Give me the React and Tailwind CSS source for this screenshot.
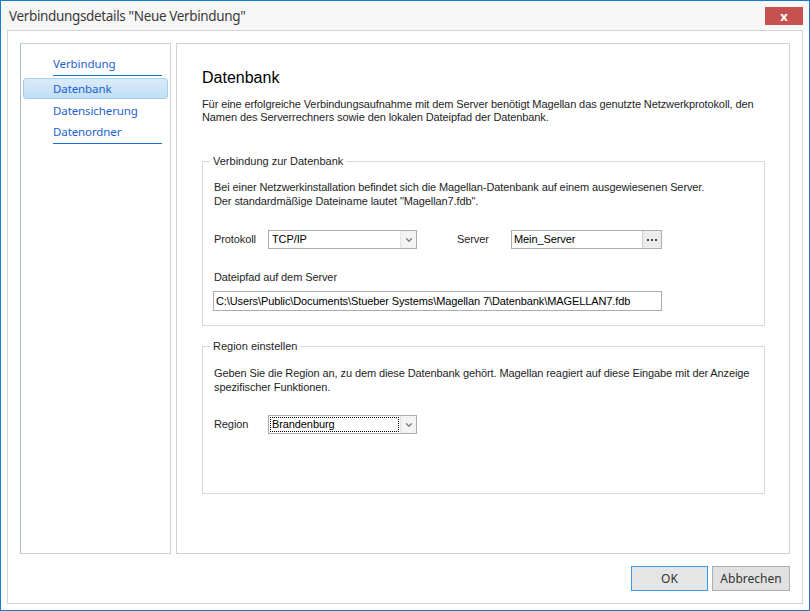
import { ChevronDown } from 'lucide-react'

const ui = { fontFamily: '"Noto Sans", "Open Sans", sans-serif' }
const tahoma = { fontFamily: '"Liberation Sans", Arial, sans-serif' }

function SelectBox({ value, focused }) {
  return (
    <div className="flex h-[19px] w-[149px] border border-[#acacac] bg-white">
      <div className="flex flex-1 items-center px-[1px]">
        <span
          className={
            focused
              ? 'flex h-[15px] w-full items-center border border-dotted border-black pl-[1px] text-[11px] text-black'
              : 'flex h-[15px] w-full items-center pl-[2px] text-[11px] text-black'
          }
        >
          {value}
        </span>
      </div>
      <div className="flex w-[16px] items-center justify-center border-l border-[#e3e3e3] bg-[#f3f3f3]">
        <ChevronDown size={10} strokeWidth={3} className="text-[#7d7d7d]" />
      </div>
    </div>
  )
}

function App() {
  return (
    <div className="flex h-[611px] w-[810px] flex-col border border-[#1979ca] bg-white" style={ui}>
      {/* title bar */}
      <div className="flex h-[29px] items-start justify-between bg-[#f7f7f7] pl-[8px] pr-[6px]">
        <span className="mt-[5px] text-[13.5px] leading-[20px] tracking-[-0.35px] text-[#3a3a3a]">
          Verbindungsdetails "Neue Verbindung"
        </span>
        <div className="mt-[6px] flex h-[18px] w-[38px] items-center justify-center bg-[#c75050] text-[13px] font-bold leading-none text-white">
          x
        </div>
      </div>

      {/* body */}
      <div className="mx-[6px] mb-[6px] flex flex-1 flex-col border border-[#d4d4d4] bg-white px-[12px] pt-[12px] pb-[12px]">
        <div className="flex h-[511px] gap-[5px]">
          {/* navigation */}
          <div className="flex w-[151px] flex-col border border-[#ccd3da] border-l-[#a9bccb] pt-[9px] text-[11.5px] tracking-[-0.1px] text-[#2360cf]">
            <div className="flex h-[21px] items-center pl-[32px]">Verbindung</div>
            <div className="mt-[1px] ml-[32px] h-px w-[109px] bg-[#1b6fd3]" />
            <div className="mx-[2px] mt-[2px] flex h-[21px] items-center rounded-[3px] border border-[#a6cfee] bg-gradient-to-b from-[#dcecf9] to-[#bfdff5] pl-[29px]">
              Datenbank
            </div>
            <div className="mt-[1px] flex h-[21px] items-center pl-[32px]">Datensicherung</div>
            <div className="flex h-[21px] items-center pl-[32px]">Datenordner</div>
            <div className="mt-[1px] ml-[32px] h-px w-[109px] bg-[#1b6fd3]" />
          </div>

          {/* content */}
          <div className="flex flex-1 flex-col border border-[#ccd3da] pl-[25px] pr-[24px] pt-[24px]" style={tahoma}>
            <h1 className="text-[16px] leading-[20px] text-black">Datenbank</h1>
            <p className="mt-[10px] text-[11px] leading-[13px] tracking-[-0.1px] text-[#1e1e1e]">
              Für eine erfolgreiche Verbindungsaufnahme mit dem Server benötigt Magellan das genutzte Netzwerkprotokoll, den
              <br />
              Namen des Serverrechners sowie den lokalen Dateipfad der Datenbank.
            </p>

            <fieldset className="mt-[30px] border border-[#d9d9d9]">
              <legend className="ml-[7px] px-[3px] text-[11px] leading-[14px] text-[#1e1e1e]">Verbindung zur Datenbank</legend>
              <div className="pl-[10px] pb-[14px] text-[11px] tracking-[-0.1px] text-[#1e1e1e]">
                <p className="mt-[12px] pl-[1px] leading-[14px]">
                  Bei einer Netzwerkinstallation befindet sich die Magellan-Datenbank auf einem ausgewiesenen Server.
                  <br />
                  Der standardmäßige Dateiname lautet "Magellan7.fdb".
                </p>
                <div className="mt-[22px] flex items-center">
                  <span className="w-[55px] pl-[1px]">Protokoll</span>
                  <SelectBox value="TCP/IP" />
                  <span className="ml-[40px] w-[54px]">Server</span>
                  <div className="flex h-[19px] w-[151px] border border-[#acacac] bg-white">
                    <span className="flex flex-1 items-center pl-[2px] text-black">Mein_Server</span>
                    <div className="flex w-[19px] items-center justify-center gap-[2px] border-l border-[#cfcfcf] bg-[#ececec]">
                      <span className="h-[2px] w-[2px] bg-[#444]" />
                      <span className="h-[2px] w-[2px] bg-[#444]" />
                      <span className="h-[2px] w-[2px] bg-[#444]" />
                    </div>
                  </div>
                </div>
                <p className="mt-[21px] pl-[1px] leading-[14px]">Dateipfad auf dem Server</p>
                <div className="mt-[7px] flex h-[20px] w-[449px] items-center border border-[#acacac] bg-white pl-[2px] text-black">
                  C:\Users\Public\Documents\Stueber Systems\Magellan 7\Datenbank\MAGELLAN7.fdb
                </div>
              </div>
            </fieldset>

            <fieldset className="mt-[13px] border border-[#d9d9d9]">
              <legend className="ml-[7px] px-[3px] text-[11px] leading-[14px] text-[#1e1e1e]">Region einstellen</legend>
              <div className="pl-[10px] pb-[59px] text-[11px] tracking-[-0.1px] text-[#1e1e1e]">
                <p className="mt-[13px] pl-[1px] leading-[14px]">
                  Geben Sie die Region an, zu dem diese Datenbank gehört. Magellan reagiert auf diese Eingabe mit der Anzeige
                  <br />
                  spezifischer Funktionen.
                </p>
                <div className="mt-[21px] flex items-center">
                  <span className="w-[55px] pl-[1px]">Region</span>
                  <SelectBox value="Brandenburg" focused />
                </div>
              </div>
            </fieldset>
          </div>
        </div>

        {/* buttons */}
        <div className="mt-[12px] flex justify-end gap-[4px]">
          <button className="h-[25px] w-[77px] border border-[#3d9ae8] bg-[#e5e5e5] text-[12px] text-[#333]">OK</button>
          <button className="h-[25px] w-[78px] border border-[#adadad] bg-[#e1e1e1] text-[12px] text-[#333]">Abbrechen</button>
        </div>
      </div>
    </div>
  )
}

export default App
